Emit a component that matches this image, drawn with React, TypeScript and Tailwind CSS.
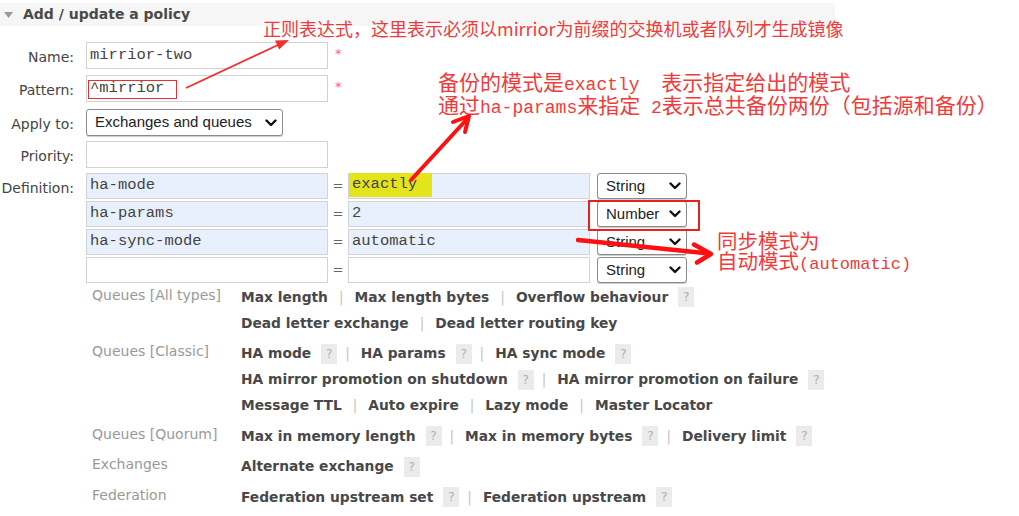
import React from "react";

type Item = { t: string; help?: boolean };

const groups: { label: string; lines: Item[][] }[] = [
  {
    label: "Queues [All types]",
    lines: [
      [{ t: "Max length" }, { t: "Max length bytes" }, { t: "Overflow behaviour", help: true }],
      [{ t: "Dead letter exchange" }, { t: "Dead letter routing key" }],
    ],
  },
  {
    label: "Queues [Classic]",
    lines: [
      [{ t: "HA mode", help: true }, { t: "HA params", help: true }, { t: "HA sync mode", help: true }],
      [{ t: "HA mirror promotion on shutdown", help: true }, { t: "HA mirror promotion on failure", help: true }],
      [{ t: "Message TTL" }, { t: "Auto expire" }, { t: "Lazy mode" }, { t: "Master Locator" }],
    ],
  },
  {
    label: "Queues [Quorum]",
    lines: [[{ t: "Max in memory length", help: true }, { t: "Max in memory bytes", help: true }, { t: "Delivery limit", help: true }]],
  },
  { label: "Exchanges", lines: [[{ t: "Alternate exchange", help: true }]] },
  {
    label: "Federation",
    lines: [[{ t: "Federation upstream set", help: true }, { t: "Federation upstream", help: true }]],
  },
];

const mono = { fontFamily: '"Liberation Mono", "Courier New", monospace' };

function Chevron() {
  return (
    <svg width="12" height="8" viewBox="0 0 12 8" className="shrink-0">
      <path d="M1.5 1.5 L6 6 L10.5 1.5" fill="none" stroke="#111" strokeWidth="2.4" strokeLinecap="round" strokeLinejoin="round" />
    </svg>
  );
}

function Select({ text, w }: { text: string; w: string }) {
  return (
    <div
      className={`${w} h-full border border-[#8a8a8a] rounded-[3px] bg-white flex items-center justify-between pl-[8px] pr-[5px] text-[15px] text-[#222] shadow-[0_1px_0_#cfcfcf]`}
      style={{ fontFamily: '"Liberation Sans", Arial, sans-serif' }}
    >
      <span>{text}</span>
      <Chevron />
    </div>
  );
}

function Input({ value, blue }: { value?: string; blue?: boolean }) {
  return (
    <div
      className={`w-[242px] h-full border border-[#d2d2d2] flex items-center pl-[3px] text-[15.5px] text-[#444] ${blue ? "bg-[#e8f0fe]" : "bg-white"}`}
      style={mono}
    >
      {value}
    </div>
  );
}

function Label({ text }: { text: string }) {
  return <div className="w-[74px] text-right text-[14px] text-[#444] pt-[3px] mr-[12px] whitespace-nowrap">{text}</div>;
}

export default function App() {
  const defs = [
    { k: "ha-mode", v: "exactly", type: "String" },
    { k: "ha-params", v: "2", type: "Number" },
    { k: "ha-sync-mode", v: "automatic", type: "String" },
    { k: "", v: "", type: "String" },
  ];
  return (
    <div
      className="relative w-[1019px] h-[516px] bg-white overflow-hidden text-[#444]"
      style={{ fontFamily: '"DejaVu Sans", Verdana, sans-serif' }}
    >
      {/* header */}
      <div className="mt-[3px] h-[23px] w-[835px] bg-[#f6f6f6] flex items-center">
        <svg width="9" height="6" viewBox="0 0 9 6" className="ml-[4px] mr-[10px]">
          <polygon points="0,0 9,0 4.5,6" fill="#999" />
        </svg>
        <span className="font-bold text-[14px] text-[#4a4a4a]">Add / update a policy</span>
      </div>

      {/* form */}
      <div className="mt-[16px] flex flex-col">
        <div className="flex h-[27px] items-center">
          <Label text="Name:" />
          <Input value="mirrior-two" />
          <span className="self-start ml-[7px] mt-[2px] text-[13px] text-[#f66]">*</span>
        </div>
        <div className="flex h-[27px] items-center mt-[6px]">
          <Label text="Pattern:" />
          <Input value="^mirrior" />
          <span className="self-start ml-[7px] mt-[2px] text-[13px] text-[#f66]">*</span>
        </div>
        <div className="flex h-[27px] items-center mt-[7px]">
          <Label text="Apply to:" />
          <Select text="Exchanges and queues" w="w-[197px]" />
        </div>
        <div className="flex h-[27px] items-center mt-[5px]">
          <Label text="Priority:" />
          <Input />
        </div>
        <div className="flex mt-[5px]">
          <div className="w-[74px] text-right text-[14px] text-[#444] pt-[5px] mr-[12px] whitespace-nowrap">Definition:</div>
          <div className="flex flex-col gap-[2px]">
            {defs.map((d, i) => (
              <div key={i} className="flex h-[26px] items-center">
                <Input value={d.k} blue={i < 3} />
                <span className="w-[20px] text-center text-[13px] text-[#666]">=</span>
                <div className="relative h-full">
                  <Input value={d.v} blue={i < 3} />
                  {i === 0 && (
                    <div className="absolute left-[1px] top-0 h-[24px] w-[83px] bg-[#e4e41c] flex items-center pl-[3px] text-[15.5px] text-[#444]" style={mono}>
                      exactly
                    </div>
                  )}
                </div>
                <div className="ml-[7px] h-full">
                  <Select text={d.type} w="w-[90px]" />
                </div>
              </div>
            ))}
          </div>
        </div>

        {/* helpers */}
        <div className="mt-[1px] flex flex-col">
          {groups.map((g, gi) => (
            <div key={gi} className={`flex ${gi > 0 ? "mt-[4.5px]" : ""}`}>
              <div className="w-[149px] pl-[92px] box-content whitespace-nowrap text-[14px] text-[#999] h-[26px] flex items-center -mt-[2px]">
                <span>{g.label}</span>
              </div>
              <div className="flex flex-col">
                {g.lines.map((line, li) => (
                  <div key={li} className="flex items-center h-[26px] whitespace-nowrap">
                    {line.map((it, ii) => (
                      <React.Fragment key={ii}>
                        {ii > 0 && <span className={`text-[13.5px] text-[#c4c4c4] mr-[11px] ${line[ii - 1].help ? "ml-[8px]" : "ml-[11px]"}`}>|</span>}
                        <span className="font-bold text-[13.8px] text-[#484848]">{it.t}</span>
                        {it.help && (
                          <span className="ml-[10px] w-[16px] h-[20px] bg-[#ebebeb] text-[#b0b0b0] text-[12px] flex items-center justify-center">?</span>
                        )}
                      </React.Fragment>
                    ))}
                  </div>
                ))}
              </div>
            </div>
          ))}
        </div>
      </div>

      {/* annotations */}
      <div
        className="absolute left-[263px] top-[17px] text-[18px] leading-[22px] text-[#f23a3a] whitespace-nowrap"
        style={{ fontFamily: '"Noto Sans CJK SC", sans-serif' }}
      >
        正则表达式，这里表示必须以mirrior为前缀的交换机或者队列才生成镜像
      </div>

      <div
        className="absolute left-[438px] top-[70px] text-[21px] leading-[23px] text-[#f23a3a] whitespace-pre"
        style={{ fontFamily: '"Noto Sans CJK SC", sans-serif' }}
      >
        <div className="h-[23px]">
          备份的模式是<span className="text-[18px]" style={mono}>exactly  </span>表示指定给出的模式
        </div>
        <div className="h-[23px]">
          通过<span className="text-[18px]" style={mono}>ha-params</span>来指定<span className="text-[18px]" style={mono}> 2</span>表示总共备份两份（包括源和备份）
        </div>
      </div>

      <div
        className="absolute left-[717px] top-[230px] text-[20.5px] leading-[20px] text-[#f23a3a] whitespace-nowrap"
        style={{ fontFamily: '"Noto Sans CJK SC", sans-serif' }}
      >
        <div className="h-[20px]">同步模式为</div>
        <div className="h-[20px]">
          自动模式<span className="text-[17px]" style={mono}>(automatic)</span>
        </div>
      </div>

      {/* red boxes */}
      <div className="absolute left-[88px] top-[80px] w-[89px] h-[19px] border-[1.5px] border-[#e63030]" />
      <div className="absolute left-[588px] top-[200px] w-[112px] h-[31px] border-2 border-[#e82020]" />

      {/* arrows */}
      <svg className="absolute inset-0 pointer-events-none" width="1019" height="516" viewBox="0 0 1019 516">
        <line x1="186" y1="88" x2="279" y2="44.5" stroke="#f03030" strokeWidth="1.8" />
        <polygon points="289,40 279.2,49.6 275,40.6" fill="#f03030" />

        <line x1="411" y1="180" x2="468" y2="118" stroke="#ff1010" strokeWidth="4" strokeLinecap="round" />
        <polyline points="453,122 469,116 465,132" fill="none" stroke="#ff1010" strokeWidth="4" strokeLinecap="round" strokeLinejoin="round" />

        <line x1="578" y1="240" x2="709" y2="253.5" stroke="#ff1010" strokeWidth="4.5" strokeLinecap="round" />
        <polyline points="694,244.5 711,254 697,262.5" fill="none" stroke="#ff1010" strokeWidth="4.5" strokeLinecap="round" strokeLinejoin="round" />
      </svg>
    </div>
  );
}
